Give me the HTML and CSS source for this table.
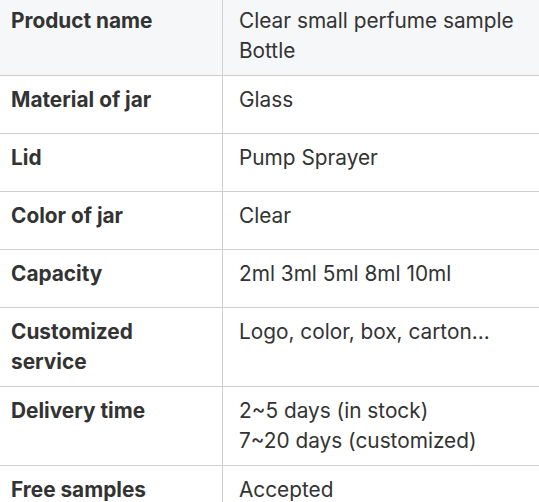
FILE: index.html
```html
<!DOCTYPE html>
<html>
<head>
<meta charset="utf-8">
<link rel="stylesheet" href="styles.css">
</head>
<body>
<table class="spec">
  <tr class="head">
    <th>Product name</th>
    <td>Clear small perfume sample Bottle</td>
  </tr>
  <tr>
    <th>Material of jar</th>
    <td>Glass</td>
  </tr>
  <tr>
    <th>Lid</th>
    <td>Pump Sprayer</td>
  </tr>
  <tr>
    <th>Color of jar</th>
    <td>Clear</td>
  </tr>
  <tr>
    <th>Capacity</th>
    <td>2ml 3ml 5ml 8ml 10ml</td>
  </tr>
  <tr>
    <th>Customized service</th>
    <td>Logo, color, box, carton...</td>
  </tr>
  <tr>
    <th>Delivery time</th>
    <td>2~5 days (in stock)<br>7~20 days (customized)</td>
  </tr>
  <tr>
    <th>Free samples</th>
    <td>Accepted</td>
  </tr>
</table>
</body>
</html>
```

FILE: styles.css
```css
html, body {
  margin: 0;
  padding: 0;
  background: #ffffff;
  overflow: hidden;
}
body {
  font-family: Inter, "Noto Sans", sans-serif;
  color: #333333;
}
.spec {
  border-collapse: collapse;
  width: 572px;
  margin: -4px 0 0 -6px;
  font-size: 20.8px;
  line-height: 30px;
}
.spec tr {
  height: 58px;
}
.spec th,
.spec td {
  border: 1px solid #cfcfcf;
  padding: 9px 16px;
  vertical-align: top;
  text-align: left;
}
.spec th {
  width: 195px;
  font-weight: 700;
}
.spec td {
  font-weight: 400;
}
.spec .head th,
.spec .head td {
  background: #f6f7f9;
}
```
